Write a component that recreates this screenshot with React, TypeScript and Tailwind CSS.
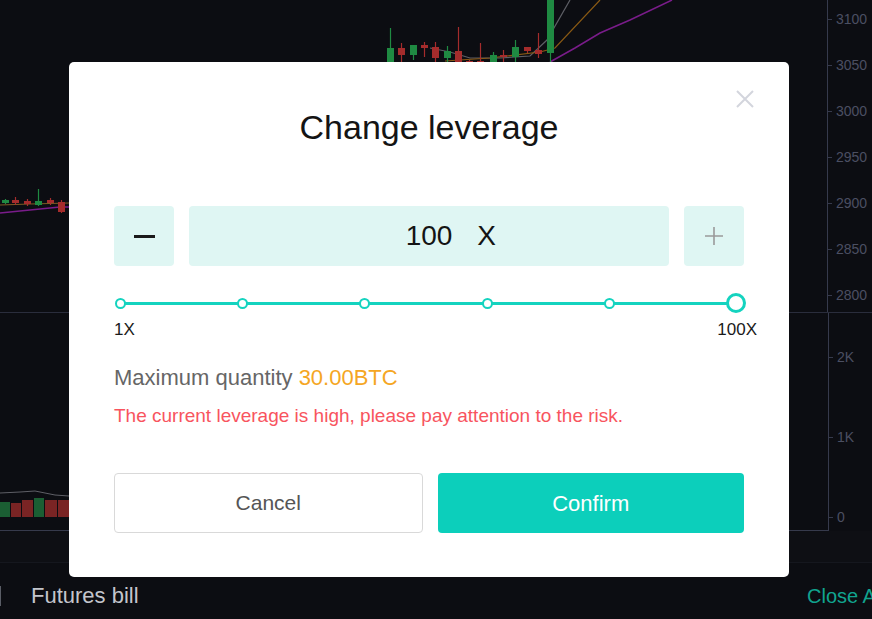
// Candle data for the visible slice of the price pane (x, open/close box, wick)
type Candle = { x: number; top: number; bottom: number; hi: number; lo: number; up: boolean }

const CANDLES: Candle[] = [
  { x: 5, top: 200, bottom: 203, hi: 199, lo: 204, up: true },
  { x: 15, top: 200, bottom: 203, hi: 197, lo: 205, up: false },
  { x: 27, top: 201, bottom: 204, hi: 199, lo: 206, up: false },
  { x: 38, top: 201, bottom: 205, hi: 189, lo: 206, up: true },
  { x: 50, top: 200, bottom: 203, hi: 198, lo: 205, up: false },
  { x: 61, top: 202, bottom: 212, hi: 200, lo: 213, up: false },
  { x: 390, top: 48, bottom: 62, hi: 28, lo: 62, up: true },
  { x: 401, top: 48, bottom: 55, hi: 43, lo: 62, up: false },
  { x: 413, top: 45, bottom: 55, hi: 45, lo: 60, up: true },
  { x: 424, top: 45, bottom: 48, hi: 42, lo: 57, up: false },
  { x: 435, top: 47, bottom: 58, hi: 42, lo: 62, up: false },
  { x: 447, top: 51, bottom: 58, hi: 46, lo: 62, up: true },
  { x: 458, top: 51, bottom: 62, hi: 27, lo: 62, up: false },
  { x: 469, top: 61, bottom: 62, hi: 60, lo: 62, up: false },
  { x: 480, top: 61, bottom: 62, hi: 43, lo: 62, up: false },
  { x: 493, top: 55, bottom: 62, hi: 52, lo: 62, up: true },
  { x: 503, top: 55, bottom: 57, hi: 50, lo: 62, up: false },
  { x: 515, top: 47, bottom: 57, hi: 40, lo: 62, up: true },
  { x: 527, top: 47, bottom: 51, hi: 47, lo: 53, up: false },
  { x: 538, top: 50, bottom: 54, hi: 33, lo: 58, up: false },
  { x: 550, top: 0, bottom: 53, hi: 0, lo: 62, up: true },
]

const VOLUME = [
  { x: 0, w: 10, top: 502, up: true },
  { x: 11, w: 10, top: 503, up: false },
  { x: 22, w: 11, top: 500, up: false },
  { x: 34, w: 10, top: 498, up: true },
  { x: 45, w: 12, top: 500, up: false },
  { x: 58, w: 11, top: 500, up: false },
]

const PRICE_TICKS = ['3100', '3050', '3000', '2950', '2900', '2850', '2800']
const VOLUME_TICKS = ['2K', '1K', '0']

function AxisLabel({ label }: { label: string }) {
  return (
    <div className="flex h-[20px] items-center gap-[4px]">
      <div className="h-px w-[4px] bg-[#363a4c]" />
      <span className="text-[14px] text-[#4b4f62]">{label}</span>
    </div>
  )
}

function PriceChart() {
  return (
    <svg width="828" height="313" className="block">
      <polyline points="0,205 30,204 69,203" fill="none" stroke="#7d5b24" strokeWidth="1.2" />
      <polyline points="0,213 30,210 60,207 69,207" fill="none" stroke="#7a1c8a" strokeWidth="1.5" />
      <polyline points="430,48 450,52 470,58 500,58 530,56 547,40 570,0" fill="none" stroke="#5e5f66" strokeWidth="1.2" />
      <polyline points="445,61 490,58 540,52 555,48 600,0" fill="none" stroke="#8a5a14" strokeWidth="1.2" />
      <polyline points="550,62 575,48 600,33 630,20 672,0" fill="none" stroke="#7a1c8a" strokeWidth="1.5" />
      {CANDLES.map((c) => {
        const color = c.up ? '#1f8a42' : '#a52c2c'
        return (
          <g key={c.x}>
            <line x1={c.x + 0.5} x2={c.x + 0.5} y1={c.hi} y2={c.lo} stroke={color} strokeWidth="1.2" />
            <rect x={c.x - 3} y={c.top} width="7" height={Math.max(c.bottom - c.top, 2)} fill={color} />
          </g>
        )
      })}
    </svg>
  )
}

function VolumeChart() {
  return (
    <svg width="828" height="217" className="block">
      <polyline points="0,180 20,179 35,178 55,182 69,183" fill="none" stroke="#5e5f66" strokeWidth="1" />
      {VOLUME.map((v) => (
        <rect
          key={v.x}
          x={v.x}
          y={v.top - 313}
          width={v.w}
          height={517 - v.top}
          fill={v.up ? '#1b5e33' : '#7a2424'}
        />
      ))}
    </svg>
  )
}

export default function App() {
  return (
    <div className="relative h-[619px] w-[872px] overflow-hidden bg-[#0c0d12] font-['Liberation_Sans',Arial,sans-serif]">
      <div className="flex flex-col">
        <div className="flex h-[313px] border-b border-[#2a2d3c]">
          <div className="w-[828px] border-r border-[#363a4c]">
            <PriceChart />
          </div>
          <div className="flex flex-1 flex-col justify-between pt-[9px] pb-[6px]">
            {PRICE_TICKS.map((t) => (
              <AxisLabel key={t} label={t} />
            ))}
          </div>
        </div>
        <div className="flex h-[218px]">
          <div className="w-[829px] border-r border-b border-[#363a4c]">
            <VolumeChart />
          </div>
          <div className="flex flex-1 flex-col justify-between pt-[34px] pb-[4px]">
            {VOLUME_TICKS.map((t) => (
              <AxisLabel key={t} label={t} />
            ))}
          </div>
        </div>
        <div className="h-[32px] border-b border-[#15171e] bg-[#0e0f14]" />
        <div className="flex h-[55px] items-center justify-between pt-[10px]">
          <div className="flex items-center">
            <div className="h-[20px] w-px bg-[#5a5d66]" />
            <span className="ml-[30px] text-[22px] text-[#c3c5cc]">Futures bill</span>
          </div>
          <span className="w-[65px] overflow-hidden whitespace-nowrap text-[20px] text-[#11a48f]">Close A</span>
        </div>
      </div>

      {/* leverage dialog */}
      <div className="absolute top-[62px] left-[69px] flex w-[720px] flex-col rounded-[5px] bg-white px-[45px] pt-[45px] pb-[44px]">
        <button className="absolute top-[28px] right-[35px]">
          <svg width="18" height="18" viewBox="0 0 18 18">
            <path d="M1 1l16 16M17 1L1 17" stroke="#d3d5dd" strokeWidth="2" />
          </svg>
        </button>
        <h2 className="h-[40px] text-center text-[34px] leading-[40px] text-[#141414]">Change leverage</h2>

        <div className="mt-[59px] flex h-[60px] gap-[15px]">
          <button className="flex w-[60px] items-center justify-center rounded-[4px] bg-[#dff6f3]">
            <div className="h-[3px] w-[21px] bg-[#1a1a1a]" />
          </button>
          <div className="flex flex-1 items-center justify-center rounded-[4px] bg-[#dff6f3]">
            <span className="relative text-[28px] text-[#141414]">
              100
              <span className="absolute left-full ml-[25px]">X</span>
            </span>
          </div>
          <button className="flex w-[60px] items-center justify-center rounded-[4px] bg-[#dff6f3]">
            <svg width="18" height="18" viewBox="0 0 18 18">
              <path d="M9 0v18M0 9h18" stroke="#9a9a9a" strokeWidth="1.6" />
            </svg>
          </button>
        </div>

        <div className="relative mt-[27px] -mr-[2px] ml-[1px] flex h-[20px] items-center justify-between">
          <div className="absolute inset-x-[4px] top-[9px] h-[3px] bg-[#14d3bf]" />
          {[0, 1, 2, 3, 4].map((i) => (
            <div key={i} className="relative h-[11px] w-[11px] rounded-full border-[2.5px] border-[#14d3bf] bg-white" />
          ))}
          <div className="relative h-[20px] w-[20px] rounded-full border-[3px] border-[#14d3bf] bg-white" />
        </div>
        <div className="mt-[7px] -mr-[13px] flex h-[20px] items-center justify-between text-[17px] text-[#1a1a1a]">
          <span>1X</span>
          <span>100X</span>
        </div>

        <div className="mt-[26px] h-[24px] text-[22px] leading-[24px] text-[#666]">
          Maximum quantity <span className="text-[#f5a623]">30.00BTC</span>
        </div>
        <div className="mt-[15px] h-[22px] text-[19px] leading-[22px] text-[#f8545e]">
          The current leverage is high, please pay attention to the risk.
        </div>

        <div className="mt-[46px] flex h-[60px] gap-[15px]">
          <button className="flex-1 rounded-[4px] border border-[#d9d9d9] text-[21px] text-[#555]">Cancel</button>
          <button className="flex-1 rounded-[4px] bg-[#0ccfbb] text-[22px] text-white">Confirm</button>
        </div>
      </div>
    </div>
  )
}
